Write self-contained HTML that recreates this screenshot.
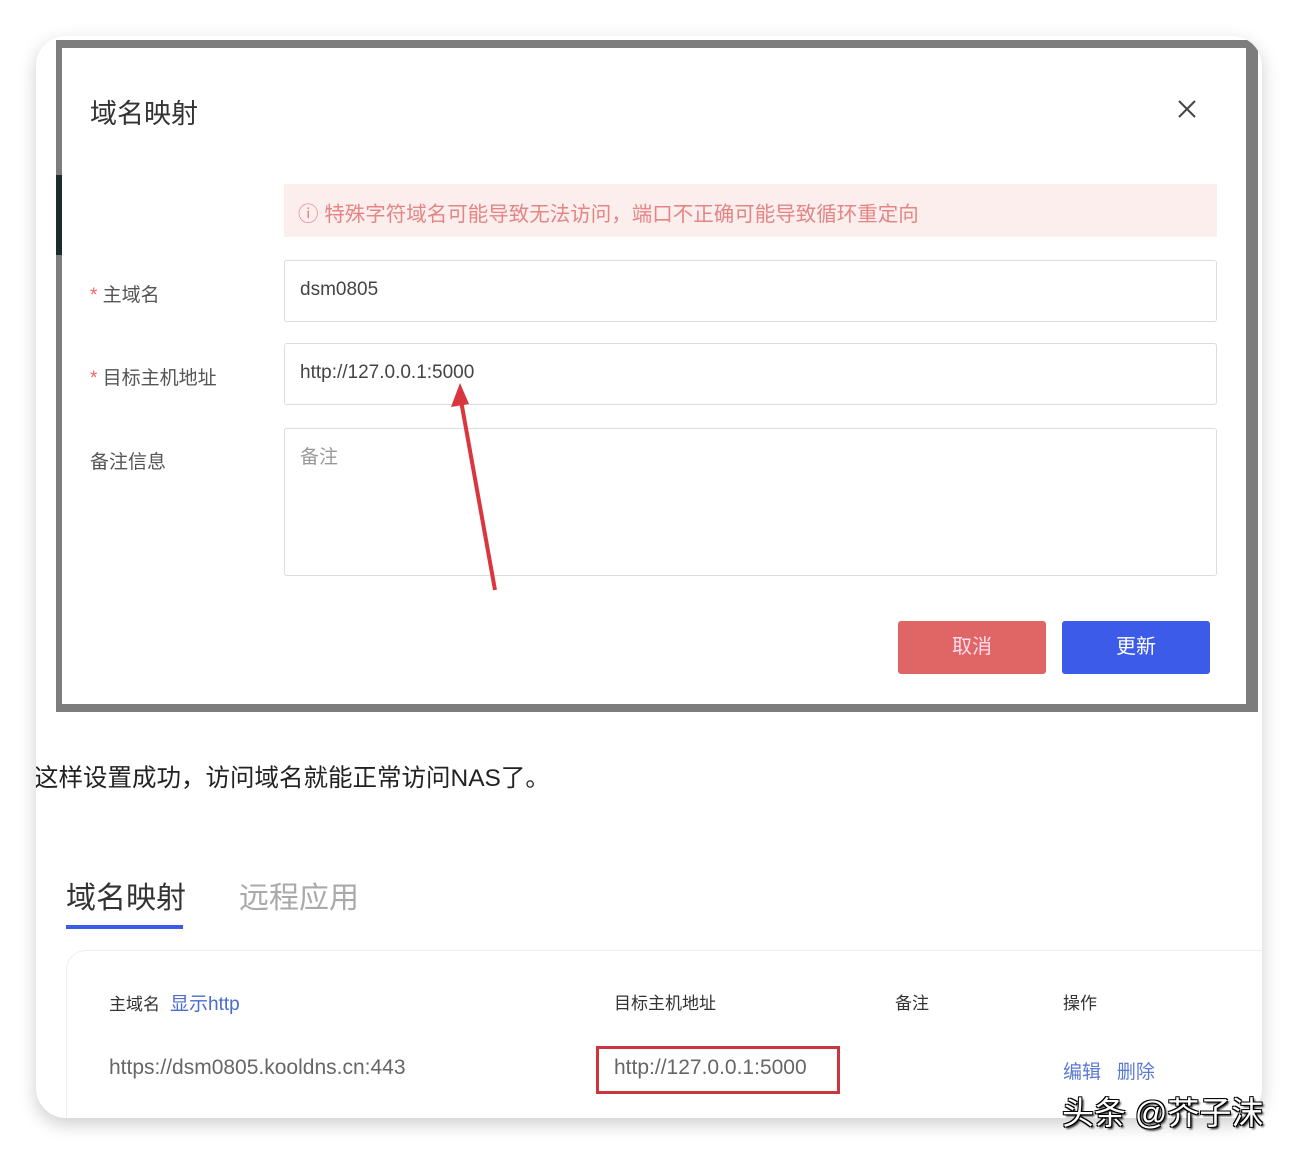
<!DOCTYPE html>
<html><head><meta charset="utf-8"><style>
*{margin:0;padding:0;box-sizing:border-box}
body{width:1298px;height:1154px;background:#fff;position:relative;overflow:hidden;font-family:"Liberation Sans","Noto Sans CJK SC",sans-serif}
.a{position:absolute}
.card{left:36px;top:36px;width:1226px;height:1082px;border-radius:30px;background:#fff;box-shadow:0 6px 18px rgba(0,0,0,.2);overflow:hidden}
.frame{left:20px;top:4px;width:1202px;height:672px;background:#7d7d7d}
.dlg{left:26px;top:12px;width:1184px;height:656px;background:#fff}
.inp{border:1px solid #dcdcdc;border-radius:3px;background:#fff}
.lbl{font-size:19px;color:#555}
</style></head><body>
<div class="a card">
<div class="a frame"></div>
<div class="a" style="left:20px;top:139px;width:6px;height:80px;background:#1d2a2a"></div>
<div class="a dlg"></div>
<div class="a" style="left:54px;top:56px;font-size:27px;color:#333">域名映射</div>
<svg class="a" style="left:1141px;top:63px" width="20" height="20"><path d="M2 2L18 18M18 2L2 18" stroke="#444" stroke-width="2"/></svg>
<div class="a" style="left:248px;top:148px;width:933px;height:53px;background:#fdeeee"></div>
<div class="a" style="left:262px;top:161px;font-size:20.5px;color:#e48585">ⓘ 特殊字符域名可能导致无法访问，端口不正确可能导致循环重定向</div>
<div class="a lbl" style="left:54px;top:244px"><span style="color:#e66">*</span> 主域名</div>
<div class="a inp" style="left:248px;top:224px;width:933px;height:62px"></div>
<div class="a" style="left:264px;top:243px;font-size:19px;color:#444">dsm0805</div>
<div class="a lbl" style="left:54px;top:327px"><span style="color:#e66">*</span> 目标主机地址</div>
<div class="a inp" style="left:248px;top:307px;width:933px;height:62px"></div>
<div class="a" style="left:264px;top:326px;font-size:19px;color:#444">http://127.0.0.1:5000</div>
<div class="a lbl" style="left:54px;top:411px">备注信息</div>
<div class="a inp" style="left:248px;top:392px;width:933px;height:148px"></div>
<div class="a" style="left:264px;top:406px;font-size:19px;color:#999">备注</div>
<svg class="a" style="left:404px;top:339px" width="70" height="220"><line x1="55" y1="215" x2="20" y2="20" stroke="#d9363e" stroke-width="4"/><polygon points="20,8 11,32 29,29" fill="#d9363e"/></svg>
<div class="a" style="left:862px;top:585px;width:148px;height:53px;background:#e06666;border-radius:3px;color:#fde;font-size:20px;text-align:center;line-height:53px">取消</div>
<div class="a" style="left:1026px;top:585px;width:148px;height:53px;background:#3b5be8;border-radius:3px;color:#fff;font-size:20px;text-align:center;line-height:53px">更新</div>
<div class="a" style="left:-2px;top:723px;font-size:24.5px;color:#222;white-space:nowrap">这样设置成功，访问域名就能正常访问NAS了。</div>
<div class="a" style="left:30px;top:837px;font-size:30px;color:#333">域名映射</div>
<div class="a" style="left:30px;top:889px;width:117px;height:4px;background:#3b5be8"></div>
<div class="a" style="left:203px;top:837px;font-size:30px;color:#aaa">远程应用</div>
<div class="a" style="left:30px;top:914px;width:1220px;height:200px;border:1px solid #eee;border-radius:20px;background:#fff"></div>
<div class="a" style="left:73px;top:953px;font-size:17px;color:#333">主域名 <span style="color:#4a6bd0;font-size:19px">&nbsp;显示http</span></div>
<div class="a" style="left:578px;top:953px;font-size:17px;color:#333">目标主机地址</div>
<div class="a" style="left:859px;top:953px;font-size:17px;color:#333">备注</div>
<div class="a" style="left:1027px;top:953px;font-size:17px;color:#333">操作</div>
<div class="a" style="left:73px;top:1020px;font-size:21px;color:#666">https://dsm0805.kooldns.cn:443</div>
<div class="a" style="left:560px;top:1010px;width:244px;height:48px;border:3px solid #c9363e"></div>
<div class="a" style="left:578px;top:1020px;font-size:21px;color:#666">http://127.0.0.1:5000</div>
<div class="a" style="left:1027px;top:1021px;font-size:19px;color:#5a7ad0">编辑 &nbsp; 删除</div>
</div>
<div class="a" style="left:1062px;top:1088px;font-size:32px;color:#fff;text-shadow:1px 1px 0 #000,-1px -1px 0 #000,1px -1px 0 #000,-1px 1px 0 #000,2px 2px 2px #000">头条 @芥子沫</div>
</body></html>
